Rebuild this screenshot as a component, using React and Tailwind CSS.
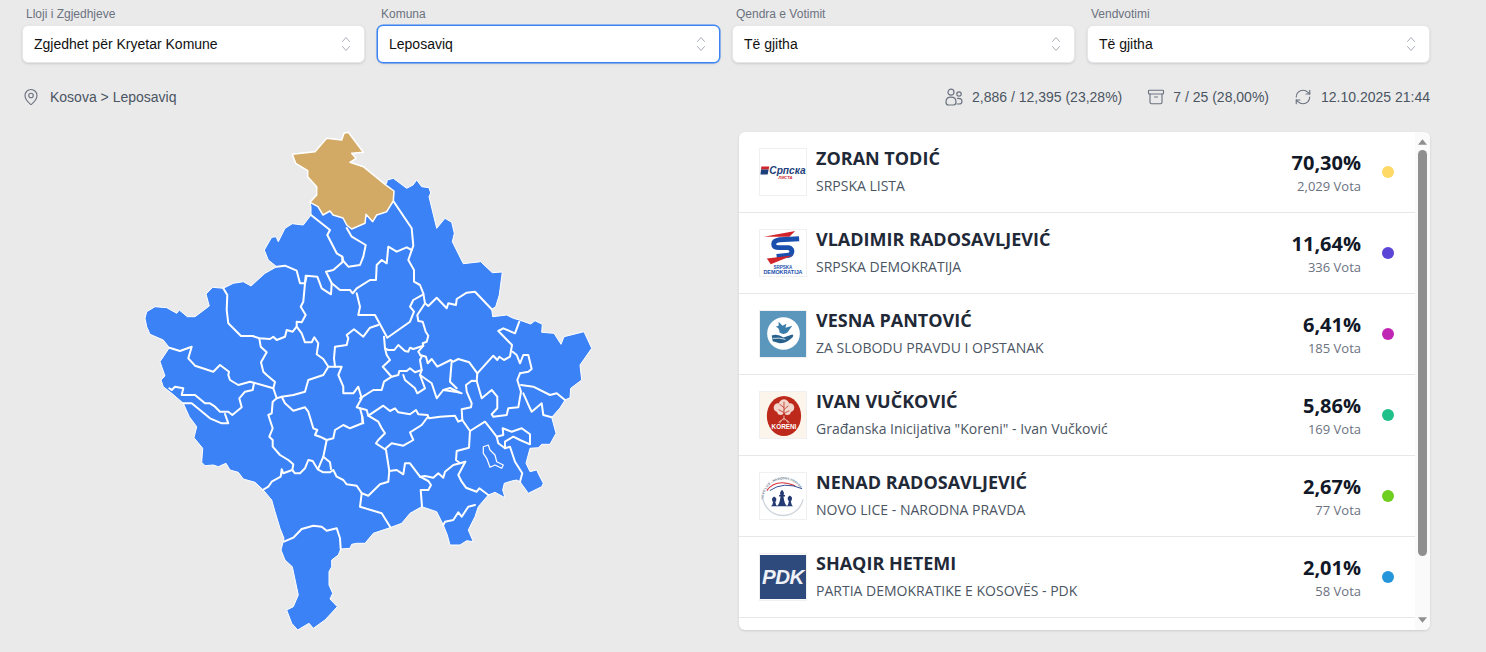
import { MapPin, Archive, RefreshCw } from 'lucide-react';

const outline = `292.3,154.3 315,151.7 326.7,138.3 341.7,140 344,133.3 348.3,132.3 363.3,152.3 351.7,153.3 356,158.3 350,162.3 363.3,166.7 385,184.3 386.7,183.3 387.3,180 393.3,178.3 406.7,188.3 413,185 416.7,180 421.7,186.7 429,187.7 430.7,193 429,196.7 436.7,228.3 445,218.3 451.7,222.3 454.3,233.3 452.3,241.7 463.3,263.7 480.7,261.7 492.3,272.7 502.3,272 499.3,295 495.7,306.7 491.7,309.3 492.7,316.7 506.7,315 513.3,318.3 519.3,320 530.7,324 535,320.7 542.3,324.3 541.7,332.3 554,333.3 561,344.3 564,336.7 584,331.7 591.7,348.3 580,365 581.7,380 570.7,388.3 570,397.7 565,400 560,408 551.7,417.3 556,433.3 550,444.3 541.7,444.3 538.3,447.7 530,448.3 526,463.3 530,471.7 536.7,470 539,475 543.3,483.3 541.7,486.7 528.3,493.3 520,481.7 516.7,480 511.7,481 504.3,483.3 502.7,490 505,497.7 495,492.3 488.3,495 478.3,506.7 475,516.7 468.3,530 473.3,541.7 466.7,540.7 460,545 450,545 447.3,535 443.3,525 436.7,511.7 421.7,506.7 410,513.3 401.7,523.3 390,527.7 373.3,533.3 365,543.3 356.7,543.3 351.7,544.3 350,548.3 340.7,549 338.3,555 331.7,560 331.7,566.7 329,571.7 329,585 332.7,593.3 330,599 337.3,606.7 325,620 313.3,628.3 309,623.3 297.7,630 291.7,623.3 286.7,610 293.3,606.7 298.3,595 292.3,566.7 285,560 281,550 284,538.3 280,528.3 275,511.7 271.7,500 263.3,490 255,482.3 243.3,479 238.3,472.3 230,470 226,463.3 218.3,466.7 213.3,465 205,465.7 201.7,462.3 202.7,448.3 194,437.7 196.7,426.7 189.3,416.7 183.3,403.3 171.7,393.3 163.3,386.7 161,380 165,376 160,361.7 169.3,347.7 163.3,340 150,334.3 146.7,326.7 145,318.3 146.7,311.7 155,306.7 166.7,307.7 176.7,313.3 179.3,310 187.3,316.7 195,316.7 209.3,306 206,294 212.7,287.3 223.3,288.3 233.3,283.3 243.3,281.7 251,286 265,273.3 276.7,266.7 268.3,260 264.3,250 271.7,237.3 276,236.7 278.3,241.7 285,228.3 292.3,223.7 303.3,225 311,215 311,206.7 310,202.3 316.7,195 316.7,186.7 307.7,176.7 307.7,170.7 295.7,163.3`;

const leposaviq = `292.3,154.3 315,151.7 326.7,138.3 341.7,140 344,133.3 348.3,132.3 363.3,152.3 351.7,153.3 356,158.3 350,162.3 363.3,166.7 385,184.3 394,191 393.3,201 386.7,211.7 376.7,215 372.7,221.7 366,214.3 365,223.3 351.7,229 346.7,225 343,218 333,215 330,211 323,215 318,206.7 310,202.3 316.7,195 316.7,186.7 307.7,176.7 307.7,170.7 295.7,163.3`;

const lake = `483.3,446.7 488.3,445 490,450 495,455 496.7,461.7 503.3,465 501.7,468.3 495,465 490,467.3 486.7,458.3 483.3,453.3`;

// municipality borders, traced in page coordinates
const borders = [
  `311,215 330,230 327.3,235 336.7,253.3 342.3,256.7 342.3,262.3 333.3,270 326,271.7 331.7,283.3 331,294.3 321.7,288.3 317.3,276.7 306.7,275.7 305,283.3 300,283.3 296.7,270.7 285,265.7 276.7,266.7`,
  `346.7,228 351.7,236.7 365.7,245 363.3,256.7 360,265 348.3,266.7 343.3,261 342.3,256.7`,
  `331.7,283.3 340,290 350,290 352.7,293.3 356.7,288.3 370,280 376,280 376.7,265 381.7,260 386.7,263.3 388.3,246.7 396.7,251.7 406.7,247.3 411.7,250`,
  `393.3,201 411.7,228.3 413.3,245.7 408.3,260 414,270 414,281.7 420,285 423.3,293.3 425,303.3 428.3,306 436.7,297.7 446.7,308.3 448.3,303.3 456,305 456.7,299 466.7,292.7 475,291.7 491.7,309.3`,
  `356.7,293.3 360,306.7 358.3,315 375,315 387.3,337.7 410,321.7 414,311.7 410,306.7 413.3,300 423.3,294.3`,
  `305.7,275.7 303.3,301.7 300.7,306.7 305.7,315 301.7,322.3 296.7,321.7 296.7,326.7 292.7,331.7 286.7,330 285,336.7 276.7,340 273.3,336.7 270,339 259.3,338.3 252.7,336 241,336 228.3,323.3 226.7,310 227.3,295 223.3,288.3`,
  `259.3,338.3 260.7,346.7 266.7,352.3 261,362.3 263.3,371.7 266.7,375 275,382 273.3,388.3 276.7,398.3 272.7,401.7 271.7,413.3 268.3,415 272.7,428.3 269.3,436.7 272.7,440 272.7,446.7 280,455 288.3,460 293.3,464.3 292.3,470 283.3,473.3 281.7,469.3 280.7,476.7 271.7,481.7 268.3,486.7 262.7,490`,
  `296.7,326.7 301.7,333.3 305,342.3 311.7,342.3 314.3,337.3 318.3,343.3 316.7,354.3 323.3,359 328.3,366.7 341.7,366.7 338.3,375 343.3,386.7 343.3,393.3 353.3,393.3 358.3,386.7 361.7,398.3 356.7,407.3 360,408.3 362.3,416.7 362.3,423.3 350,428.3 343.3,425 335,430 333.3,438.3 326.7,440 320,436.7 315,435 317.3,430 313.3,428.3 308.3,411.7 305,407.3 293.3,410.7 285,403.3 281.7,396.7 276.7,398.3`,
  `328.3,366.7 323.3,375 308.3,380 305,391.7 293.3,395 281.7,396.7`,
  `335,366.7 334,358.3 335,346.7 346.7,345 348.3,338.3 346.7,335 354,329.3 363.3,336.7 370,327.7 378.3,325`,
  `169.3,347.7 180,351 191.7,346.7 188.3,358.3 195,365.7 213.3,371.7 220,365 229,371.7 228.3,375 230,380 238.3,385 250,381.7 273.3,388.3`,
  `169.3,388.3 171.7,390 175,386.7 183.3,388.3 181.7,395 195,395 205,403.3 210,403.3 215,406.7 220,411.7 228.3,411.7 232.3,415 241.7,407.3 239.3,398.3 245,391.7 252.7,390 254,383.3`,
  `183.3,403.3 191.7,403.3 210,418.3 221.7,423.3 228.3,423.3 225,414`,
  `292.3,470 295,473.3 300,473.3 305,468.3 308.3,460 312.7,461 317.7,469.3 323.3,472.3 330,472.3 333.3,470 336.7,476.7 343.3,480 346.7,484.3 356.7,485.7 361.7,493.3 368.3,495.7 380,484.3 388.3,481.7 389.3,471 396.7,470 403.3,474.3 405,463.3 410,463.3 420,476.7 428.3,481 431,485 428.3,490 420.7,490 422,506.7`,
  `318.3,468.3 323.3,456.7 330,462.3 331,469`,
  `326.7,440 323.3,456.7`,
  `284,541.7 293.3,537.7 301.7,529 313.3,525.7 321.7,526.7 326.7,530.7 336.7,528.3 340,538.3 340.7,549`,
  `361.7,493.3 360,506.7 381.7,513.3 390.7,527.7`,
  `389.3,471 386,450 376,443.3 378.3,440 385,433.3 381.7,428.3 378.3,421.7 368.3,415.7 383.3,405.7 390,411 395,408.3 398.3,412.3 410,414.3 416,410 418.3,414.3 427.7,415 429,418.3 440,416.7 455,415.7 458.3,421.7 462.3,420 470,431 469,447.7 456.7,451 456,460 460,463.3 453.3,465 445,471.7 443.3,477.7 438.3,473.3 433.3,477.7 425,476 420,476.7`,
  `427.7,417 421.7,425 410,432.3 413.3,440 403.3,445.7 391.7,443.3 385,449`,
  `470,431 485,421.7 496.7,436.7 498.3,443.3 505,448.3 510,446.7 515,461.7 522.3,473.3 520,481.7`,
  `465.3,461.7 458.3,475 461.7,481.7 466,487.7 476.7,491.7 479.3,488.3 488.3,495`,
  `460,463.3 465.3,461.7`,
  `475,505 468.3,506.7 461.7,516.7 458.3,512.3 453.3,520 445,521.7 443.3,525`,
  `462.3,420 461.7,409.3 471,407.3 471.7,403.3 466.7,391.7 466,385 471.7,380.7 476.7,381 477.3,373.3`,
  `476.7,381 481.7,398.3 491.7,390 497.3,396.7 497.3,408.3 491.7,414.3 493.3,416.7 506.7,415 508.3,408.3 518.3,407.3 521,391.7 517.3,380 520,373.3`,
  `521,385 533.3,386.7 550,395 556.7,393.3 565,400`,
  `523.3,393.3 530,408.3 531.7,411.7 541.7,403.3 543.3,415 551.7,417.3`,
  `496.7,436.7 503.3,435 502.7,428.3 511.7,431.7 521.7,428.3 530,434.3 530,444.3 520,440 513.3,436.7 505,441.7 505,448.3`,
  `360,398.3 373.3,390 381.7,390 384,381.7 391.7,376.7 390,375 382.7,366.7 390,360 386.7,355 385,348.3 384,336.7`,
  `385,348.3 388.3,350 394.3,350 398.3,345 405,351 408.3,351.7 410,347.7 413.3,349 423.3,345.7 422.7,343.3 426.7,341.7 428.3,335.7 425.7,331.7 422.7,321.7 418.3,321 417.3,315 425,303.3`,
  `423.3,345.7 418.3,351.7 421.7,356.7 420,360 421.7,370 415,372.3 410,368.3 406.7,371 399.3,371 398.3,375 391.7,376.7`,
  `403.3,375 405,380 415,388.3 417.3,393.3 425,388.3 420,375 421.7,370`,
  `420,375 431.7,383.3 436.7,398.3 443.3,390 456.7,392 461.7,393.3 450,388`,
  `450,388 443.3,390`,
  `451.7,361 450,381.7 456.7,388.3`,
  `420,355 426,356.7 427.7,363.3 431.7,359 437.3,366.7 450.7,360 453.3,361.7 458.3,359 469.3,362.3 477.3,373.3 493.3,355.7 497.3,360 499.3,356.7 504,360 510,356.7 512,345 498.3,331 503.3,328.3 515,333.3 519.3,321.7`,
  `512.7,351.7 516.7,355 520,363.3 523.3,355 528.3,355 531.7,369 528.3,371.7 520,373.3`,
  `360,408.3 366.7,410 368.3,415.7`,
  `362.3,416.7 363.3,423.3`,
];

const candidates = [
  { name: 'ZORAN TODIĆ', party: 'SRPSKA LISTA', pct: '70,30%', votes: '2,029 Vota', dot: 'bg-[#ffd966]', logo: <SrpskaLista /> },
  { name: 'VLADIMIR RADOSAVLJEVIĆ', party: 'SRPSKA DEMOKRATIJA', pct: '11,64%', votes: '336 Vota', dot: 'bg-[#5b45d6]', logo: <SrpskaDemokratija /> },
  { name: 'VESNA PANTOVIĆ', party: 'ZA SLOBODU PRAVDU I OPSTANAK', pct: '6,41%', votes: '185 Vota', dot: 'bg-[#c026b4]', logo: <Sloboda /> },
  { name: 'IVAN VUČKOVIĆ', party: 'Građanska Inicijativa "Koreni" - Ivan Vučković', pct: '5,86%', votes: '169 Vota', dot: 'bg-[#20c08a]', logo: <Koreni /> },
  { name: 'NENAD RADOSAVLJEVIĆ', party: 'NOVO LICE - NARODNA PRAVDA', pct: '2,67%', votes: '77 Vota', dot: 'bg-[#6fcf20]', logo: <NovoLice /> },
  { name: 'SHAQIR HETEMI', party: 'PARTIA DEMOKRATIKE E KOSOVËS - PDK', pct: '2,01%', votes: '58 Vota', dot: 'bg-[#2596da]', logo: <Pdk /> },
];

const filters = [
  { label: 'Lloji i Zgjedhjeve', value: 'Zgjedhet për Kryetar Komune' },
  { label: 'Komuna', value: 'Leposaviq', focused: true },
  { label: 'Qendra e Votimit', value: 'Të gjitha' },
  { label: 'Vendvotimi', value: 'Të gjitha' },
];

function SrpskaLista() {
  return (
    <svg viewBox="0 0 47 47" className="w-full h-full">
      <rect width="47" height="47" fill="#fff" />
      <path d="M1.5 18 L9.5 18 L8.8 21 L1 21 Z" fill="#d2232a" />
      <path d="M1 21 L8.8 21 L7.8 26 L0.5 26 Z" fill="#1d3f7a" />
      <text x="9.5" y="26" fontSize="10.4" fontStyle="italic" fontWeight="700" fontFamily="Liberation Sans, sans-serif" fill="#1d3f7a">Српска</text>
      <text x="19" y="31" fontSize="4.2" fontStyle="italic" fontWeight="700" fontFamily="Liberation Sans, sans-serif" fill="#d2232a">ЛИСТА</text>
    </svg>
  );
}

function SrpskaDemokratija() {
  return (
    <svg viewBox="0 0 47 47" className="w-full h-full">
      <rect width="47" height="47" fill="#fff" />
      <path d="M4 7 L36 1 L30 7 Z" fill="#d2232a" />
      <path d="M40 9 L20 10 Q14 11 14 14.5 Q14 18 20 18 L29 18 Q33 19 32.5 22.5 Q32 26 27 26 L17 27" fill="none" stroke="#1b4fae" strokeWidth="5" />
      <path d="M7 29 L33 26 L11 35 Z" fill="#d2232a" />
      <text x="23.5" y="39.5" textAnchor="middle" fontSize="4.6" fontWeight="700" fontFamily="Liberation Sans, sans-serif" fill="#1b4fae">SRPSKA</text>
      <text x="23.5" y="45" textAnchor="middle" fontSize="5.5" fontWeight="700" fontFamily="Liberation Sans, sans-serif" fill="#1b4fae">DEMOKRATIJA</text>
    </svg>
  );
}

function Sloboda() {
  return (
    <svg viewBox="0 0 47 47" className="w-full h-full">
      <rect width="47" height="47" fill="#5b97bc" />
      <circle cx="24" cy="23" r="16.7" fill="#fff" />
      <path d="M19 11 L23 15 L27 13 L26 17 L33 15 L28 22 Q24 25 20 22 Q20 17 16 16 L19 15 Z" fill="#3a7dab" />
      <path d="M12 25 Q18 23 24 27 L33 24 Q35 25 33 27 Q27 33 20 33 L13 31 Z" fill="#27618c" />
      <path d="M13 28 Q20 27 26 29" stroke="#fff" strokeWidth="0.8" fill="none" />
    </svg>
  );
}

function Koreni() {
  return (
    <svg viewBox="0 0 47 47" className="w-full h-full">
      <rect width="47" height="47" fill="#fbf5ec" />
      <ellipse cx="24.5" cy="24.5" rx="17.5" ry="20.5" fill="#bd2a1b" />
      <g fill="#f3d6cc">
        <circle cx="24.5" cy="13" r="5.5" />
        <circle cx="18.5" cy="16" r="4.5" />
        <circle cx="30.5" cy="16" r="4.5" />
        <circle cx="21" cy="20" r="3.5" />
        <circle cx="28" cy="20" r="3.5" />
      </g>
      <path d="M24.5 10 V25 M24.5 16 L20 12.5 M24.5 18 L29 14 M24.5 21 L19 18 M24.5 22 L30 19" stroke="#bd2a1b" strokeWidth="0.8" />
      <path d="M24.5 24 V29 M24.5 27 L19 31 M24.5 27 L30 31 M22 29 L20 32 M27 29 L29 32" stroke="#f3d6cc" strokeWidth="0.8" fill="none" />
      <text x="24.5" y="38" textAnchor="middle" fontSize="6.5" fontWeight="700" fontFamily="Liberation Sans, sans-serif" fill="#fff">KORENI</text>
    </svg>
  );
}

function NovoLice() {
  return (
    <svg viewBox="0 0 47 47" className="w-full h-full">
      <rect width="47" height="47" fill="#fff" />
      <path id="novo-arc" d="M3.5 27 A20.5 20.5 0 1 1 44.5 27" fill="none" />
      <text fontSize="3.3" fontWeight="700" fontFamily="Liberation Sans, sans-serif" fill="#6f7f94">
        <textPath href="#novo-arc">NOVO LICE - NARODNA PRAVDA</textPath>
      </text>
      <path d="M3 27 A21 21 0 0 0 44 27" fill="none" stroke="#cfd5dc" strokeWidth="1.4" />
      <path d="M7 18 Q16 5 36 13" stroke="#d8353b" strokeWidth="1.2" fill="none" />
      <path d="M10 18 Q24 8 43 16" stroke="#2f4f96" strokeWidth="1" fill="none" />
      <path d="M17 34 Q20 33 21 24 H19.5 V22.5 H21 Q19.5 20 22.5 17 Q25.5 20 24 22.5 H25.5 V24 H24 Q25 33 28 34 Z" fill="#233a72" />
      <path d="M11 34 Q13 33 13.5 29 H12.5 V27.5 Q11.5 26 14.5 24 Q17.5 26 16.5 27.5 V29 H15.5 Q16 33 18 34 Z" fill="#233a72" />
      <path d="M27 34 Q29 33 29.5 28 H28.5 V26.5 Q27.5 25 30.5 23 Q33.5 25 32.5 26.5 V28 H31.5 Q32 33 34 34 Z" fill="#233a72" />
    </svg>
  );
}

function Pdk() {
  return (
    <svg viewBox="0 0 47 47" className="w-full h-full">
      <rect y="1" width="47" height="45" fill="#2e4a7d" />
      <text x="23.5" y="31" textAnchor="middle" fontSize="21" fontStyle="italic" fontWeight="700" fontFamily="Liberation Sans, sans-serif" fill="#eef1f6" letterSpacing="-0.5">PDK</text>
    </svg>
  );
}

function Chevrons() {
  return (
    <svg viewBox="0 0 12 18" className="w-3 h-[18px] text-[#a8aeb8]" fill="none" stroke="currentColor" strokeWidth="1" strokeLinecap="round" strokeLinejoin="round">
      <path d="M2.5 6.5 L6 2.5 L9.5 6.5" />
      <path d="M2.5 11.5 L6 15.5 L9.5 11.5" />
    </svg>
  );
}

function UsersIcon() {
  return (
    <svg viewBox="0 0 18 18" className="w-[18px] h-[18px] text-[#6b7280]" fill="none" stroke="currentColor" strokeWidth="1.2">
      <circle cx="6" cy="4.2" r="3" />
      <circle cx="14" cy="6" r="2.2" />
      <path d="M1 14 Q1 9.2 6 9.2 Q11 9.2 11 14 Q11 17 8.5 17 H3.5 Q1 17 1 14 Z" />
      <path d="M12 10.4 Q17 9.8 17 13.5 Q17 16 14 16 H11.5" />
    </svg>
  );
}

function KosovoMap() {
  return (
    <svg viewBox="130 130 480 504" className="w-[480px] h-[504px] -mt-[2px]">
      <polygon points={outline} fill="#3b82f6" stroke="#ffffff" strokeWidth="1" strokeLinejoin="round" />
      <g fill="none" stroke="#ffffff" strokeWidth="2" strokeLinejoin="round" strokeLinecap="round">
        {borders.map((pts, i) => (
          <polyline key={i} points={pts} />
        ))}
        <polygon points={lake} strokeWidth="1.2" />
      </g>
      <polygon points={leposaviq} fill="#d2aa66" stroke="#ffffff" strokeWidth="1.5" strokeLinejoin="round" />
    </svg>
  );
}

function CandidateRow({ c }) {
  return (
    <div className="flex items-center h-[81px] pl-[20px] border-b border-[#e5e7eb]">
      <div className="w-[48px] h-[48px] border border-[#f0f0f0] shrink-0 overflow-hidden">{c.logo}</div>
      <div className="ml-[9px] flex-1 flex flex-col h-full">
        <div className="mt-[12px] h-[28px] text-[18px] leading-[28px] font-bold text-[#1f2937]">{c.name}</div>
        <div className="mt-[4px] text-[14px] leading-[20px] font-medium text-[#4b5563]">{c.party}</div>
      </div>
      <div className="flex flex-col items-end h-full pt-[17px]">
        <div className="text-[20px] leading-[28px] font-bold text-[#111827]">{c.pct}</div>
        <div className="text-[13px] leading-[18px] text-[#6b7280]">{c.votes}</div>
      </div>
      <div className={`w-3 h-3 rounded-full ml-[21px] mr-[21px] ${c.dot}`} />
    </div>
  );
}

export default function App() {
  return (
    <div className="min-h-[652px] bg-[#eaeaea] overflow-hidden" style={{ fontFamily: '"Liberation Sans", sans-serif' }}>
      <div className="w-[1408px] ml-[22px] pt-[6px]">
        <div className="grid grid-cols-4 gap-[12px]">
          {filters.map((f) => (
            <div key={f.label}>
              <div className="pl-1 text-[12px] leading-[16px] text-[#6b7280]">{f.label}</div>
              <div className={`mt-[3px] h-[38px] bg-white rounded-md flex items-center justify-between pl-[11px] pr-[12px] text-[14px] text-[#111] shadow-sm ${f.focused ? 'border border-[#3b82f6] ring-[0.5px] ring-[#3b82f6]' : 'border border-[#e5e7eb]'}`}>
                <span>{f.value}</span>
                <Chevrons />
              </div>
            </div>
          ))}
        </div>

        <div className="flex items-center justify-between h-[20px] mt-[24px] text-[14px] text-[#4b5563]">
          <div className="flex items-center gap-[10px]">
            <MapPin size={18} strokeWidth={1.5} className="text-[#6b7280]" />
            <span>Kosova &gt; Leposaviq</span>
          </div>
          <div className="flex items-center gap-[25px]">
            <div className="flex items-center gap-[9px]"><UsersIcon /><span>2,886 / 12,395 (23,28%)</span></div>
            <div className="flex items-center gap-[8px]"><Archive size={18} strokeWidth={1.5} className="text-[#6b7280]" /><span>7 / 25 (28,00%)</span></div>
            <div className="flex items-center gap-[9px]"><RefreshCw size={18} strokeWidth={1.5} className="text-[#6b7280]" /><span>12.10.2025 21:44</span></div>
          </div>
        </div>

        <div className="flex mt-[25px]">
          <div className="w-[717px] pl-[108px] shrink-0">
            <KosovoMap />
          </div>
          <div className="w-[691px] h-[498px] bg-white rounded-md shadow-sm flex overflow-hidden" style={{ fontFamily: '"Open Sans", sans-serif' }}>
            <div className="flex-1">
              {candidates.map((c) => (
                <CandidateRow key={c.name} c={c} />
              ))}
            </div>
            <div className="w-[15px] bg-[#fafafa] flex flex-col items-center">
              <svg viewBox="0 0 10 6" className="w-[9px] h-[6px] mt-[7px] text-[#8f8f8f]"><path d="M5 0 L10 6 L0 6 Z" fill="currentColor" /></svg>
              <div className="w-[9px] h-[406px] mt-[5px] rounded-full bg-[#8f8f8f]" />
              <svg viewBox="0 0 10 6" className="w-[9px] h-[6px] mt-[61px] text-[#8f8f8f]"><path d="M5 6 L10 0 L0 0 Z" fill="currentColor" /></svg>
            </div>
          </div>
        </div>
      </div>
    </div>
  );
}
